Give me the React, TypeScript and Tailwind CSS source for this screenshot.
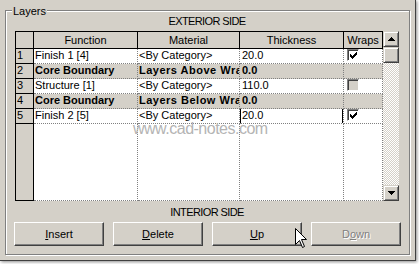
import React from "react";

type Row = {
  n: string;
  fn: string;
  mat: string;
  th: string;
  core?: boolean;
  wrap?: "checked" | "disabled";
  focus?: boolean;
};

const rows: Row[] = [
  { n: "1", fn: "Finish 1 [4]", mat: "<By Category>", th: "20.0", wrap: "checked" },
  { n: "2", fn: "Core Boundary", mat: "Layers Above Wrap", th: "0.0", core: true },
  { n: "3", fn: "Structure [1]", mat: "<By Category>", th: "110.0", wrap: "disabled" },
  { n: "4", fn: "Core Boundary", mat: "Layers Below Wrap", th: "0.0", core: true },
  { n: "5", fn: "Finish 2 [5]", mat: "<By Category>", th: "20.0", wrap: "checked", focus: true },
];

const checkPixels: [number, number][] = [];
const pattern = [
  [6],
  [5, 6],
  [0, 4, 5, 6],
  [0, 1, 3, 4, 5],
  [0, 1, 2, 3, 4],
  [1, 2, 3],
  [2],
];
pattern.forEach((xs, y) => xs.forEach((x) => checkPixels.push([x, y])));

function CheckBox({ kind }: { kind: "checked" | "disabled" }) {
  return (
    <div
      className={`ml-[3px] mt-0 h-[12px] w-[12px] border border-t-[#808080] border-l-[#808080] border-r-white border-b-white shadow-[inset_1px_1px_0_#404040] ${
        kind === "disabled" ? "bg-[#d4d0c8]" : "bg-white"
      }`}
    >
      {kind === "checked" && (
        <svg width="10" height="10" viewBox="0 0 10 10" shapeRendering="crispEdges" className="block">
          {checkPixels.map(([x, y], i) => (
            <rect key={i} x={x + 1.5} y={y + 1.5} width="1" height="1" fill="#000" />
          ))}
        </svg>
      )}
    </div>
  );
}

function ScrollBtn({ dir }: { dir: "up" | "down" }) {
  return (
    <div className="flex h-[16px] w-[16px] items-center justify-center border border-t-[#d4d0c8] border-l-[#d4d0c8] border-r-[#404040] border-b-[#404040] bg-[#d4d0c8] shadow-[inset_1px_1px_0_#fff,inset_-1px_-1px_0_#808080]">
      <svg width="7" height="4" viewBox="0 0 7 4" shapeRendering="crispEdges">
        {dir === "up" ? (
          <path d="M3.5 0 L7 4 L0 4 Z" fill="#000" />
        ) : (
          <path d="M0 0 L7 0 L3.5 4 Z" fill="#000" />
        )}
      </svg>
    </div>
  );
}

function Btn({ children, disabled }: { children: React.ReactNode; disabled?: boolean }) {
  return (
    <div
      className={`flex h-[24px] items-center justify-center border border-t-white border-l-white border-r-[#404040] border-b-[#404040] bg-[#d4d0c8] shadow-[inset_-1px_-1px_0_#808080] leading-[13px] ${
        disabled ? "text-[#808080] [text-shadow:1px_1px_0_#fff]" : "text-black"
      }`}
    >
      <span>{children}</span>
    </div>
  );
}

export default function App() {
  const hdr =
    "flex items-center justify-center border-r border-b border-black bg-[#d4d0c8] leading-[13px] whitespace-nowrap";
  const rh = "border-r border-b border-black bg-[#d4d0c8] leading-[13px] pl-[1px]";
  const dc = "border-r border-b border-dotted border-[#808080] overflow-hidden whitespace-nowrap leading-[13px]";

  return (
    <div className="relative h-[264px] w-[419px] overflow-hidden bg-white font-['Liberation_Sans',Arial,sans-serif] text-[11px] text-black">
      <div className="h-[261px] w-[416px] border-r border-b border-[#404040] bg-[#d4d0c8] pl-[5px] pt-[10px] shadow-[1px_1px_3px_rgba(0,0,0,0.45)]">
        <div className="relative h-[245px] w-[405px] border border-[#808080] shadow-[inset_1px_1px_0_#fff,1px_1px_0_#fff]">
          <div className="absolute left-[6px] top-[-6px] bg-[#d4d0c8] px-[1px] leading-[13px]">Layers</div>

          <div className="ml-[9px] mt-[4px] h-[13px] w-[384px] text-center leading-[13px] tracking-[-0.6px]">
            EXTERIOR SIDE
          </div>

          <div className="ml-[9px] mt-[3px] flex h-[170px] w-[384px]">
            <div className="grid h-[170px] w-[368px] grid-cols-[18px_104px_102px_104px_39px] grid-rows-[17px_repeat(5,15px)_77px] border-l border-t border-black">
              <div className={hdr}></div>
              <div className={hdr}>Function</div>
              <div className={hdr}>Material</div>
              <div className={hdr}>Thickness</div>
              <div className={hdr}>Wraps</div>

              {rows.map((r) => {
                const bg = r.core ? "bg-[#d4d0c8] font-bold" : "bg-white";
                return (
                  <React.Fragment key={r.n}>
                    <div className={rh}>{r.n}</div>
                    <div className={`${dc} ${bg} pl-[1px]`}>{r.fn}</div>
                    <div className={`${dc} ${bg} pl-[1px] ${r.core ? "tracking-[0.5px]" : ""}`}>{r.mat}</div>
                    <div className={`${dc} ${bg} relative ${r.focus ? "" : "pl-[2px]"}`}>
                      {r.focus ? (
                        <div className="absolute left-0 top-[-1px] h-[16px] w-full border border-black pl-[1px] leading-[13px]">
                          {r.th}
                        </div>
                      ) : (
                        r.th
                      )}
                    </div>
                    <div className={`${dc} ${bg}`}>{r.wrap && <CheckBox kind={r.wrap} />}</div>
                  </React.Fragment>
                );
              })}

              <div className={rh}></div>
              <div className={`${dc} bg-white`}></div>
              <div className={`${dc} bg-white`}></div>
              <div className={`${dc} bg-white`}></div>
              <div className={`${dc} bg-white`}></div>
            </div>

            <div className="flex h-[170px] w-[16px] flex-col">
              <ScrollBtn dir="up" />
              <div className="h-[16px] w-[16px] border border-t-[#d4d0c8] border-l-[#d4d0c8] border-r-[#404040] border-b-[#404040] bg-[#d4d0c8] shadow-[inset_1px_1px_0_#fff,inset_-1px_-1px_0_#808080]"></div>
              <div className="flex-1 bg-[image:repeating-conic-gradient(#d4d0c8_0_25%,#ffffff_0_50%)] bg-[length:2px_2px]"></div>
              <ScrollBtn dir="down" />
            </div>
          </div>

          <div className="ml-[9px] mt-[5px] h-[13px] w-[384px] text-center leading-[13px] tracking-[-0.6px]">
            INTERIOR SIDE
          </div>

          <div className="ml-[8px] mt-[3px] grid w-[387px] grid-cols-4 gap-x-[9px]">
            <Btn>
              <span className="underline">I</span>nsert
            </Btn>
            <Btn>
              <span className="underline">D</span>elete
            </Btn>
            <Btn>
              <span className="underline">U</span>p
            </Btn>
            <Btn disabled>
              D<span className="underline">o</span>wn
            </Btn>
          </div>
        </div>
      </div>

      <div className="pointer-events-none absolute left-[133px] top-[121px] whitespace-nowrap text-[16px] leading-[16px] tracking-[-0.5px] text-[#b4b4b4]">
        www.cad-notes.com
      </div>

      <svg
        className="absolute left-[295px] top-[228px]"
        width="13"
        height="21"
        viewBox="0 0 13 21"
      >
        <path
          d="M0.5 0.5 L0.5 16.5 L4.5 12.5 L7.5 19.5 L9.5 18.5 L6.5 11.5 L11.5 11.5 Z"
          fill="#fff"
          stroke="#000"
          strokeWidth="1"
          strokeLinejoin="miter"
        />
      </svg>
    </div>
  );
}
